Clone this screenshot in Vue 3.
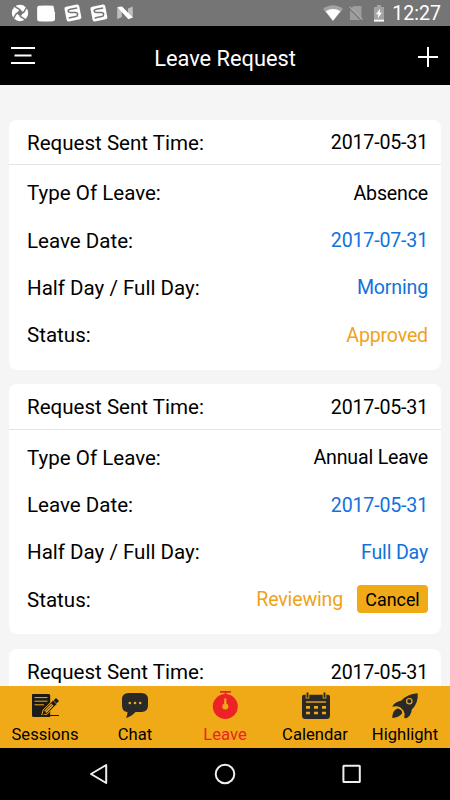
<template>
  <div class="screen">
    <div class="status-bar">
      <div class="notifications">
        <svg width="18" height="18" viewBox="0 0 18 18">
          <circle cx="9" cy="9" r="8.2" fill="#fff" />
          <path d="M9 5.2L12.6 8.6L9.4 12.6L5.4 9.2Z" fill="#757575" />
          <path d="M3.2 2.2L9.3 5.8M15.8 3.2L12.2 9.2M14.8 15.8L8.8 12.2M2.2 14.8L5.8 8.8" stroke="#757575" stroke-width="1.5" />
        </svg>
        <svg width="18" height="17" viewBox="0 0 18 17">
          <path d="M2 .8Q9 0 16.3.8Q17.4 3.7 17.2 6.3L18 7V14.5Q17.8 16.2 16 16.3Q9 16.8 1.6 16.3Q0 16 .2 14Q0 8 .2 2.5Q.4 1 2 .8Z" fill="#fff" />
        </svg>
        <svg v-for="n in 2" :key="n" width="18" height="18" viewBox="0 0 18 18">
          <g transform="rotate(-11 9 9)">
            <rect x="1.4" y="1.5" width="15" height="15" rx="2" fill="#fff" />
            <path d="M14 4.9H7C3.8 4.9 3.9 7.5 6.6 8.1L11.2 9C14.5 9.8 13.6 13 10.8 13H3.8" fill="none" stroke="#757575" stroke-width="1.5" />
          </g>
        </svg>
        <svg width="18" height="16" viewBox="0 0 18 16">
          <path d="M1.2 2.6V14.2L5.8 12V5.2ZM16.8 1.6V13L12 10V3.6Z" fill="#bdbdbd" />
          <path d="M1.2 2L6 1.5L16.8 12.6L12.4 14.2Z" fill="#fff" />
        </svg>
      </div>
      <div class="system">
        <svg width="20" height="16" viewBox="0 0 20 16">
          <path d="M0 4Q10-3.5 20 4L10 16Z" fill="#a3a3a3" />
          <path d="M2.6 6.2Q10 1.6 17.4 6.2L10 15.8Z" fill="#fff" />
        </svg>
        <svg class="sim" width="14" height="16" viewBox="0 0 14 16">
          <path d="M4.5 1H12.5V15H1V4.5Z" fill="#9d9d9d" />
          <path d="M0 3L13.5 16.5" stroke="#757575" stroke-width="1.4" />
          <path d="M.4 1.6L13.5 14.8" stroke="#a9a9a9" stroke-width="1.3" />
        </svg>
        <svg class="battery" width="12" height="17" viewBox="0 0 12 17">
          <path d="M4 0H8V2H11V16.4H1V2H4Z" fill="#a3a3a3" />
          <path d="M1 14.7H11V16.5H1Z" fill="#fff" />
          <path d="M7.2 3.4L3 9.2H5.4L4.7 13.4L9 7.6H6.6Z" fill="#fff" />
        </svg>
        <span class="clock">12:27</span>
      </div>
    </div>

    <header class="app-bar">
      <svg width="24" height="18" viewBox="0 0 24 18">
        <path d="M0 1H24M3.5 8.5H20.5M0 16H24" stroke="#fff" stroke-width="1.8" />
      </svg>
      <h1>Leave Request</h1>
      <svg class="plus" width="20" height="20" viewBox="0 0 20 20">
        <path d="M10 0V20M0 10H20" stroke="#fff" stroke-width="2" />
      </svg>
    </header>

    <main class="list">
      <section v-for="(item, i) in requests" :key="i" class="card">
        <div class="card-head">
          <span class="label">Request Sent Time:</span>
          <span class="value">{{ item.sent }}</span>
        </div>
        <div v-if="item.type" class="card-body">
          <div class="row">
            <span class="label">Type Of Leave:</span>
            <span class="value">{{ item.type }}</span>
          </div>
          <div class="row">
            <span class="label">Leave Date:</span>
            <span class="value blue">{{ item.date }}</span>
          </div>
          <div class="row">
            <span class="label">Half Day / Full Day:</span>
            <span class="value blue">{{ item.period }}</span>
          </div>
          <div class="row">
            <span class="label">Status:</span>
            <span class="value amber">{{ item.status }}</span>
            <button v-if="item.status === 'Reviewing'" class="cancel">Cancel</button>
          </div>
        </div>
      </section>
    </main>

    <nav class="tabs">
      <a v-for="tab in tabs" :key="tab" class="tab" :class="{ active: tab === activeTab }" @click="activeTab = tab">
        <svg v-if="tab === 'Sessions'" width="28" height="28" viewBox="0 0 28 28">
          <path d="M1.8 2H17.8Q19.2 2 19.2 3.5V25H2.5Q1 25 1 23.5V3Q1 2 1.8 2Z" fill="#1c1b18" />
          <path d="M3.5 5.6H16.5M3.5 9.2H16.5M3.5 12.8H13" stroke="#f1aa17" stroke-width="1" />
          <path d="M10.5 23.8L12.2 18L22 8.2L26 12.2L16 22.2Z" fill="#1c1b18" stroke="#f1aa17" stroke-width="1" />
          <path d="M13.2 18.8L20.3 11.6L22.5 13.8L15.4 21Z" fill="#f1aa17" />
          <path d="M14 19.8L21.3 12.6" stroke="#1c1b18" stroke-width=".7" />
          <path d="M22.5 8.5L25 6L28 9L25.5 11.5Z" fill="#1c1b18" />
          <path d="M9 23.5H28" stroke="#1c1b18" stroke-width="1" />
        </svg>
        <svg v-else-if="tab === 'Chat'" width="28" height="28" viewBox="0 0 28 28">
          <path d="M7.5 1H20.5Q27 1 27 7.5V13.5Q27 20 20.5 20H14.5Q10.5 24.5 5 26Q6.5 23 6.5 20Q1 19.5 1 13.5V7.5Q1 1 7.5 1Z" fill="#292a28" />
          <circle v-for="x in [8.8, 14, 19.2]" :key="x" :cx="x" cy="11" r="1.3" fill="#f1aa17" />
        </svg>
        <svg v-else-if="tab === 'Leave'" class="timer" width="28" height="29" viewBox="0 0 28 29">
          <path d="M9 .9H20M14.5 .5V4.5" stroke="#ec2227" stroke-width="1.8" />
          <circle cx="14.3" cy="15.5" r="12.5" fill="#ec2227" />
          <path d="M14.3 7.5V14" stroke="#f1aa17" stroke-width="2.2" />
          <circle cx="14.3" cy="15.5" r="3" fill="#f1aa17" />
        </svg>
        <svg v-else-if="tab === 'Calendar'" class="calendar" width="28" height="28" viewBox="0 0 28 28">
          <path d="M2 2.8H26Q28 2.8 28 4.8V23.5Q28 27 24.5 27H3.5Q0 27 0 23.5V4.8Q0 2.8 2 2.8Z" fill="#292a28" />
          <path d="M5.5 0V6.4M22.5 0V6.4" stroke="#f1aa17" stroke-width="3.6" />
          <path d="M5.5 .4V5.8M22.5 .4V5.8" stroke="#292a28" stroke-width="1.9" />
          <path d="M4 10H24" stroke="#f1aa17" stroke-width="1.4" />
          <path d="M4 15.3H8M12 15.3H16M20 15.3H24M4 21H8M12 21H16M20 21H24" stroke="#f1aa17" stroke-width="2.7" />
        </svg>
        <svg v-else width="28" height="28" viewBox="0 0 28 28">
          <path d="M26.7 1.2Q27.5 11.3 20.7 17.7Q20.5 23 15.5 26.2L13.2 25.9Q14.5 22 12.6 18.7L9.5 15.5Q6 13.5 1.2 14.8Q3.5 9.8 10.4 8.4Q16 2.3 26.7 1.2Z" fill="#292a28" />
          <circle cx="18.3" cy="9.2" r="2.7" fill="#292a28" stroke="#f1aa17" stroke-width="1.2" />
          <path d="M7.8 16.8Q11.8 18.6 11 21.2Q8.8 25.2 1.2 26Q1.4 18.9 5.5 16.9Q6.7 16.4 7.8 16.8Z" fill="#292a28" />
        </svg>
        <span class="tab-name">{{ tab }}</span>
      </a>
    </nav>

    <div class="nav-bar">
      <svg width="20" height="22" viewBox="0 0 20 22">
        <path d="M17.2 2V20L2 11Z" fill="none" stroke="#eee" stroke-width="2" stroke-linejoin="round" />
      </svg>
      <svg width="22" height="22" viewBox="0 0 22 22">
        <circle cx="11" cy="11" r="9.3" fill="none" stroke="#eee" stroke-width="2" />
      </svg>
      <svg width="20" height="20" viewBox="0 0 20 20">
        <rect x="2.4" y="1.7" width="16.4" height="16.4" rx=".5" fill="none" stroke="#eee" stroke-width="2" />
      </svg>
    </div>
  </div>
</template>

<script setup>
import { ref } from 'vue'

const tabs = ['Sessions', 'Chat', 'Leave', 'Calendar', 'Highlight']
const activeTab = ref('Leave')

// Details are optional, a card without them shows only its head
const requests = ref([
  { sent: '2017-05-31', type: 'Absence', date: '2017-07-31', period: 'Morning', status: 'Approved' },
  { sent: '2017-05-31', type: 'Annual Leave', date: '2017-05-31', period: 'Full Day', status: 'Reviewing' },
  { sent: '2017-05-31' }
])
</script>

<style>
body {
  background: #000;
}
</style>

<style scoped>
.screen {
  display: flex;
  flex-direction: column;
  width: 450px;
  height: 800px;
  overflow: hidden;
  background: #f5f5f5;
  color: #000;
  font-family: Roboto, 'Liberation Sans', sans-serif;
}

svg {
  display: block;
  flex: none;
}

.status-bar {
  flex: none;
  display: flex;
  justify-content: space-between;
  align-items: center;
  height: 26px;
  padding: 0 9px 0 11px;
  background: #757575;
}

.notifications {
  display: flex;
  align-items: center;
  gap: 8.3px;
}

.system {
  display: flex;
  align-items: center;
}

.sim {
  margin-left: 6px;
}

.battery {
  margin-left: 10px;
}

.clock {
  margin-left: 7px;
  padding-top: 2px;
  font-size: 19.6px;
  line-height: 26px;
  color: #fff;
}

.app-bar {
  flex: none;
  display: flex;
  justify-content: space-between;
  align-items: center;
  height: 59px;
  padding: 0 12px 0 11px;
  background: #000;
}

.app-bar h1 {
  margin: 5px 3px 0 0;
  font-size: 21.8px;
  font-weight: 400;
  color: #fff;
}

.plus {
  margin-top: 3px;
}

.list {
  flex: 1;
  min-height: 0;
  overflow: hidden;
  padding: 34.6px 9px 0;
}

.card {
  height: 250px;
  margin-bottom: 14.6px;
  border-radius: 8px;
  background: #fff;
}

.card-head,
.row {
  display: flex;
  align-items: center;
  padding: 0 13px 0 18px;
}

.card-head {
  height: 45.5px;
  padding-top: 2px;
  box-sizing: border-box;
  border-bottom: 1px solid #e4e4e4;
}

.card-body {
  padding-top: 4.5px;
}

.row {
  height: 47.3px;
}

.label {
  flex: 1;
  font-size: 20.55px;
}

.value {
  font-size: 19.6px;
  letter-spacing: -0.18px;
}

.blue {
  color: #1272dc;
}

.amber {
  color: #efa31a;
}

.cancel {
  width: 71px;
  height: 28px;
  margin: -2px 0 0 14px;
  padding: 2px 0 0;
  border: 0;
  border-radius: 4px;
  background: #f1aa17;
  color: #000;
  font-family: inherit;
  font-size: 17.9px;
}

.tabs {
  flex: none;
  display: flex;
  height: 62px;
  background: #f1aa17;
}

.tab {
  flex: 1;
  display: flex;
  flex-direction: column;
  align-items: center;
  justify-content: space-between;
  padding: 6px 0 3px;
  box-sizing: border-box;
}

.tab-name {
  font-size: 16.6px;
  line-height: 20px;
}

.timer {
  margin-top: -1px;
}

.calendar {
  margin-left: 2px;
}

.tab.active {
  color: #ec2227;
}

.nav-bar {
  flex: none;
  display: flex;
  align-items: center;
  justify-content: space-between;
  height: 52px;
  padding: 0 89px;
  box-sizing: border-box;
  background: #000;
}
</style>
